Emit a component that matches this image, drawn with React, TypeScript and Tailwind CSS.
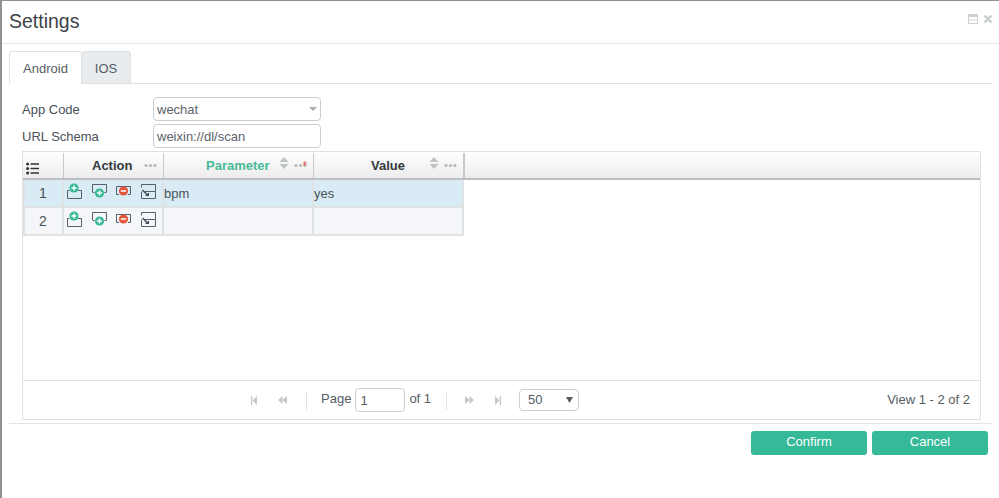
import React from "react";

const Plus = ({ c, sign }: { c: string; sign: "+" | "-" }) => (
  <>
    <circle cx="0" cy="0" r="4.6" fill={c} />
    <path d={sign === "+" ? "M-2.6 0H2.6M0 -2.6V2.6" : "M-2.6 0H2.6"} stroke="#fff" strokeWidth="1.5" />
  </>
);

const AddAbove = () => (
  <svg width="17" height="17" viewBox="0 0 17 17" fill="none">
    <path d="M3.5 7.5H1.5V15.5H15.5V7.5H12" stroke="#56606a" strokeWidth="1" />
    <g transform="translate(8 5)"><Plus c="#37b997" sign="+" /></g>
  </svg>
);
const AddBelow = () => (
  <svg width="17" height="17" viewBox="0 0 17 17" fill="none">
    <path d="M1.5 9V1.5H15.5V9" stroke="#56606a" strokeWidth="1" />
    <path d="M1.5 9.5H3.5M13.5 9.5H15.5" stroke="#56606a" strokeWidth="1" />
    <g transform="translate(8.5 10)"><Plus c="#37b997" sign="+" /></g>
  </svg>
);
const Remove = () => (
  <svg width="17" height="17" viewBox="0 0 17 17" fill="none">
    <path d="M1.5 11.5V3.5H15.5V11.5M1.5 11.5H4M13 11.5H15.5" stroke="#56606a" strokeWidth="1" />
    <g transform="translate(8.5 8)"><Plus c="#e4583e" sign="-" /></g>
  </svg>
);
const Move = () => (
  <svg width="17" height="17" viewBox="0 0 17 17" fill="none">
    <path d="M1.5 4.5V1.5H15.5V8.5H5M1.5 8.5V15.5H15.5V8.5" stroke="#56606a" strokeWidth="1" />
    <path d="M2.5 7L7 11.5" stroke="#3e4750" strokeWidth="1.4" />
    <path d="M5 13L9 9.5V13Z" fill="#3e4750" />
  </svg>
);

const Sort = () => (
  <svg width="10" height="14" viewBox="0 0 10 14" className="mb-[5px] shrink-0">
    <path d="M5 1L9.5 6H0.5Z" fill="#bfc3c6" />
    <path d="M0.5 8H9.5L5 13Z" fill="#bfc3c6" />
  </svg>
);
const Dots = () => (
  <svg width="13" height="5" viewBox="0 0 13 5" className="shrink-0">
    <circle cx="2" cy="2.5" r="1.6" fill="#b5b9bc" />
    <circle cx="6.5" cy="2.5" r="1.6" fill="#b5b9bc" />
    <circle cx="11" cy="2.5" r="1.6" fill="#b5b9bc" />
  </svg>
);

const Row = ({ n, bg, p, v }: { n: number; bg: string; p: string; v: string }) => (
  <div className={`flex h-[28px] border-b-2 border-[#dfe3e6] text-[13px] text-[#4a5158] ${bg}`}>
    <div className="flex w-[41px] items-center justify-center border-l-2 border-r-2 border-[#dfe3e6] pr-[1px] text-[14px]">{n}</div>
    <div className="flex w-[100px] items-start border-r-2 border-[#dfe3e6] pl-[2px] pt-[3px]">
      <AddAbove />
      <span className="ml-[8px] flex"><AddBelow /></span>
      <span className="ml-[7px] flex"><Remove /></span>
      <span className="ml-[8px] flex"><Move /></span>
    </div>
    <div className="flex w-[150px] items-center border-r-2 border-[#dfe3e6] pt-[1px]">{p}</div>
    <div className="flex w-[150px] items-center border-r-2 border-[#dfe3e6] pt-[1px]">{v}</div>
  </div>
);

export default function App() {
  return (
    <div className="flex h-[498px] w-[999px] flex-col overflow-hidden border-t border-l-2 border-[#8f9295] bg-white font-['Liberation_Sans',Arial,sans-serif] text-[#4a5158]">
      <div className="flex h-[43px] shrink-0 items-center justify-between border-b border-[#e3e5e7] pl-[7px] pr-[6px]">
        <div className="pb-[1px] text-[19.5px] text-[#3d4349]">Settings</div>
        <div className="flex items-center gap-[5px] pb-[6px]">
          <svg width="10" height="10" viewBox="0 0 10 10" fill="none">
            <rect x="0.5" y="0.5" width="9" height="9" stroke="#cfd2d4" />
            <rect x="0.5" y="0.5" width="9" height="2.5" fill="#cfd2d4" />
            <path d="M0.5 6H9.5" stroke="#cfd2d4" />
          </svg>
          <svg width="10" height="10" viewBox="0 0 10 10"><path d="M1.5 1.5L8.5 8.5M8.5 1.5L1.5 8.5" stroke="#c9ccce" strokeWidth="2.4" /></svg>
        </div>
      </div>

      <div className="mt-[7px] ml-[7px] mr-[7px] flex h-[33px] shrink-0 items-end border-b border-[#dfe2e5] text-[13px]">
        <div className="-mb-[1px] flex h-[33px] w-[73px] items-center justify-center rounded-t-[3px] border border-b-0 border-[#dfe2e5] bg-white pt-[2px] text-[#555c63]">Android</div>
        <div className="-mb-[1px] flex h-[33px] w-[49px] items-center justify-center rounded-t-[3px] border border-l-0 border-[#dfe2e5] bg-[#e9ecef] pt-[2px] text-[#555c63]">IOS</div>
      </div>

      <div className="mt-[13px] flex shrink-0 flex-col gap-[3px] pl-[20px] text-[13px] text-[#4a5158]">
        <div className="flex items-center">
          <div className="w-[131px] pt-[1px]">App Code</div>
          <div className="relative flex h-[24px] w-[168px] items-center rounded-[4px] border border-[#c9ced2] pl-[3px] pt-[1px] text-[#5c6269]">
            wechat
            <svg width="8" height="4" viewBox="0 0 8 4" className="absolute right-[3px] top-[9px]"><path d="M0 0H8L4 4Z" fill="#a9adb0" /></svg>
          </div>
        </div>
        <div className="flex items-center">
          <div className="w-[131px] pt-[1px]">URL Schema</div>
          <div className="flex h-[24px] w-[168px] items-center rounded-[4px] border border-[#c9ced2] pl-[3px] pt-[1px] text-[#5c6269]">weixin://dl/scan</div>
        </div>
      </div>

      <div className="ml-[20px] mt-[3px] flex h-[269px] w-[959px] shrink-0 flex-col border border-[#dfe2e5]">
        <div className="flex h-[28px] shrink-0 items-stretch border-b-2 border-[#bcbfc2] bg-gradient-to-b from-white to-[#ececec] pt-[1px] text-[13px] font-bold text-[#33383d]">
          <div className="flex w-[41px] items-center border-r border-[#c8cbce] pl-[3px] pt-[6px]">
            <svg width="13" height="13" viewBox="0 0 13 13">
              <circle cx="1.6" cy="2" r="1.5" fill="#2f3439" />
              <circle cx="1.6" cy="6.5" r="1.5" fill="#2f3439" />
              <circle cx="1.6" cy="11" r="1.5" fill="#2f3439" />
              <path d="M4.5 2H13M4.5 6.5H13M4.5 11H13" stroke="#2f3439" strokeWidth="1.3" />
            </svg>
          </div>
          <div className="flex w-[100px] items-center border-r border-[#c8cbce]">
            <span className="ml-[28px]">Action</span>
            <span className="ml-[12px] flex"><Dots /></span>
          </div>
          <div className="flex w-[150px] items-center border-r border-[#c8cbce]">
            <span className="ml-[42px] text-[#48bb97]">Parameter</span>
            <span className="ml-[9px] flex"><Sort /></span>
            <span className="ml-[5px] flex"><Dots /></span>
            <span className="-ml-[4px] text-[12px] font-normal leading-none text-[#d9534f]">*</span>
          </div>
          <div className="flex w-[151px] items-center border-r-2 border-[#c8cbce]">
            <span className="ml-[57px]">Value</span>
            <span className="ml-[24px] flex"><Sort /></span>
            <span className="ml-[5px] flex"><Dots /></span>
          </div>
          <div className="flex-1" />
        </div>

        <div className="flex-1">
          <Row n={1} bg="w-[441px] bg-[#d9ecf5]" p="bpm" v="yes" />
          <Row n={2} bg="w-[441px] bg-[#f4f6f9]" p="" v="" />
        </div>

        <div className="relative flex h-[39px] shrink-0 items-center border-t border-[#dfe2e5] text-[13px] text-[#555c63]">
          <div className="ml-[228px] flex items-center">
            <svg width="6" height="9" viewBox="0 0 6 9"><path d="M0 0H1.3V9H0ZM6 0V9L1.5 4.5Z" fill="#c3c8cc" /></svg>
            <svg width="9" height="8" viewBox="0 0 9 8" className="ml-[21px]"><path d="M4.5 0V8L0 4ZM9 0V8L4.5 4Z" fill="#c3c8cc" /></svg>
            <span className="ml-[19px] h-[19px] w-px bg-[#e2e4e6]" />
            <span className="ml-[14px] pb-[2px]">Page</span>
            <span className="ml-[4px] flex h-[24px] w-[50px] items-center rounded-[4px] border border-[#c9ced2] pl-[4px] pt-[2px]">1</span>
            <span className="ml-[4px] pb-[2px]">of 1</span>
            <span className="ml-[15px] h-[19px] w-px bg-[#e2e4e6]" />
            <svg width="9" height="8" viewBox="0 0 9 8" className="ml-[18px]"><path d="M0 0L4.5 4L0 8ZM4.5 0L9 4L4.5 8Z" fill="#c3c8cc" /></svg>
            <svg width="6" height="9" viewBox="0 0 6 9" className="ml-[21px]"><path d="M0 0L4.5 4.5L0 9ZM4.7 0H6V9H4.7Z" fill="#c3c8cc" /></svg>
            <span className="relative ml-[18px] flex h-[22px] w-[60px] items-center rounded-[4px] border border-[#c9ced2] pl-[8px] text-[13px]">
              50
              <svg width="7" height="6" viewBox="0 0 7 6" className="absolute right-[5px] top-[7px]"><path d="M0 0H7L3.5 6Z" fill="#555c63" /></svg>
            </span>
          </div>
          <div className="absolute right-[10px] top-[9px] text-[13px]">View 1 - 2 of 2</div>
        </div>
      </div>

      <div className="ml-[7px] mr-[7px] mt-[3px] h-px shrink-0 bg-[#e3e5e7]" />

      <div className="mt-[7px] flex justify-end gap-[5px] pr-[11px] text-[13px] text-white">
        <div className="flex h-[24px] w-[116px] items-center justify-center rounded-[3px] bg-[#35b998] pb-[2px]">Confirm</div>
        <div className="flex h-[24px] w-[116px] items-center justify-center rounded-[3px] bg-[#35b998] pb-[2px]">Cancel</div>
      </div>
    </div>
  );
}
